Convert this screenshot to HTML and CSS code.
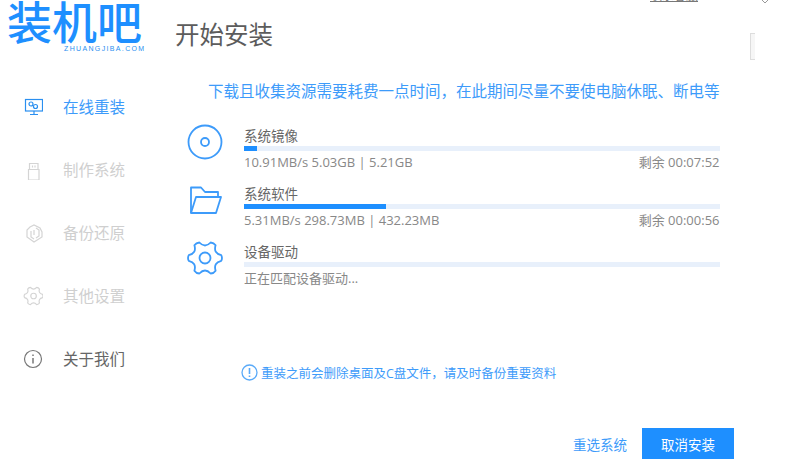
FILE: index.html
```html
<!DOCTYPE html>
<html>
<head>
    <title>装机吧</title>
    <meta charset="UTF-8">
    <link rel="stylesheet" href="styles.css">
</head>
<body>
<div class="app">
    <div class="top-link">联系客服</div>
    <svg class="top-close" width="14" height="6" viewBox="0 0 14 6"><path d="M1 -3 L7 3 L13 -3" fill="none" stroke="#999" stroke-width="1"/></svg>
    <div class="edge-box"></div>

    <div class="sidebar">
        <div class="logo">
            <div class="logo-name">装机吧</div>
            <div class="logo-url">ZHUANGJIBA.COM</div>
        </div>
        <div class="nav">
            <div class="nav-item active">
                <svg class="nav-icon" width="20" height="20" viewBox="0 0 20 20" fill="none" stroke="#2a8ff0" stroke-width="1.2">
                    <rect x="2.5" y="2.5" width="17" height="11.5"/>
                    <circle cx="8" cy="7" r="2"/>
                    <circle cx="12.5" cy="9.5" r="2"/>
                    <path d="M11 14 V17 M7 17.5 H15"/>
                </svg>
                <span>在线重装</span>
            </div>
            <div class="nav-item disabled">
                <svg class="nav-icon" width="20" height="20" viewBox="0 0 20 20" fill="none" stroke="#d4d4d4" stroke-width="1.2">
                    <path d="M6.5 3.5 H15 V9.5 H6.5 Z"/>
                    <path d="M5.5 9.5 H16 V20 H5.5 Z"/>
                    <path d="M9.5 5.5 V7.5 M12 5.5 V7.5"/>
                </svg>
                <span>制作系统</span>
            </div>
            <div class="nav-item disabled">
                <svg class="nav-icon" width="20" height="20" viewBox="0 0 20 20" fill="none" stroke="#d4d4d4" stroke-width="1.2">
                    <path d="M7 4 L11 2 L17 5 L19 9 V14 L11 19 L4 14 V7 Z"/>
                    <path d="M8 8 V14 L11 16 M13 5 L16 7 V13 L13 15 M11 7 V12"/>
                </svg>
                <span>备份还原</span>
            </div>
            <div class="nav-item disabled">
                <svg class="nav-icon" width="20" height="20" viewBox="-1 0 36 36" fill="none" stroke="#d4d4d4" stroke-width="2.1" stroke-linejoin="round">
                    <path d="M34.25 15.13 Q35.7 18 34.25 20.87 Q26.2 22.75 28.6 30.64 Q26.85 33.3 23.64 33.5 Q18 27.5 12.36 33.5 Q9.15 33.3 7.4 30.64 Q9.8 22.75 1.75 20.87 Q.3 18 1.75 15.13 Q9.8 13.25 7.4 5.36 Q9.15 2.7 12.36 2.5 Q18 8.5 23.64 2.5 Q26.85 2.7 28.6 5.36 Q26.2 13.25 34.25 15.13 Z"/>
                    <circle cx="18" cy="18" r="5"/>
                </svg>
                <span>其他设置</span>
            </div>
            <div class="nav-item about">
                <svg class="nav-icon" width="20" height="20" viewBox="0 0 20 20" fill="none" stroke="#777" stroke-width="1.2">
                    <circle cx="10" cy="10" r="8.5"/>
                    <path d="M10 9 V14.5" stroke-width="1.5"/>
                    <path d="M10 5.5 V7" stroke-width="1.5"/>
                </svg>
                <span>关于我们</span>
            </div>
        </div>
    </div>

    <div class="main">
        <h1 class="title">开始安装</h1>
        <div class="notice">下载且收集资源需要耗费一点时间，在此期间尽量不要使电脑休眠、断电等</div>

        <div class="tasks">
            <div class="task">
                <svg class="task-icon" width="36" height="36" viewBox="0 0 36 36" fill="none" stroke="#3d9bfa" stroke-width="1.8">
                    <circle cx="18" cy="18" r="16.5"/>
                    <circle cx="18" cy="18" r="4"/>
                </svg>
                <div class="task-body">
                    <div class="task-name">系统镜像</div>
                    <div class="bar"><div class="bar-fill" style="width: 13px"></div></div>
                    <div class="task-info">
                        <span>10.91MB/s 5.03GB | 5.21GB</span>
                        <span>剩余 00:07:52</span>
                    </div>
                </div>
            </div>
            <div class="task">
                <svg class="task-icon" width="36" height="36" viewBox="0 0 36 36" fill="none" stroke="#3d9bfa" stroke-width="1.8" stroke-linejoin="round">
                    <path d="M4 31 V5.5 H14 L18 10 H31 V15"/>
                    <path d="M4 31 L9 15 H34 L29 31 Z"/>
                </svg>
                <div class="task-body">
                    <div class="task-name">系统软件</div>
                    <div class="bar"><div class="bar-fill" style="width: 142px"></div></div>
                    <div class="task-info">
                        <span>5.31MB/s 298.73MB | 432.23MB</span>
                        <span>剩余 00:00:56</span>
                    </div>
                </div>
            </div>
            <div class="task">
                <svg class="task-icon" width="36" height="36" viewBox="0 0 36 36" fill="none" stroke="#3d9bfa" stroke-width="1.8" stroke-linejoin="round">
                    <path d="M34.25 15.13 Q35.7 18 34.25 20.87 Q26.2 22.75 28.6 30.64 Q26.85 33.3 23.64 33.5 Q18 27.5 12.36 33.5 Q9.15 33.3 7.4 30.64 Q9.8 22.75 1.75 20.87 Q.3 18 1.75 15.13 Q9.8 13.25 7.4 5.36 Q9.15 2.7 12.36 2.5 Q18 8.5 23.64 2.5 Q26.85 2.7 28.6 5.36 Q26.2 13.25 34.25 15.13 Z"/>
                    <circle cx="18" cy="18" r="5.5"/>
                </svg>
                <div class="task-body">
                    <div class="task-name">设备驱动</div>
                    <div class="bar"></div>
                    <div class="task-info">
                        <span>正在匹配设备驱动...</span>
                    </div>
                </div>
            </div>
        </div>

        <div class="tip">
            <svg width="17" height="17" viewBox="0 0 17 17" fill="none" stroke="#5aaaf8" stroke-width="1.3">
                <circle cx="8.5" cy="8.5" r="7.5"/>
                <path d="M8.5 4 V10 M8.5 11.5 V13" stroke-width="1.6"/>
            </svg>
            <span>重装之前会删除桌面及C盘文件，请及时备份重要资料</span>
        </div>

        <div class="actions">
            <a class="reselect">重选系统</a>
            <button class="cancel">取消安装</button>
        </div>
    </div>
</div>
</body>
</html>
```

FILE: styles.css
```css
html, body {
    margin: 0;
    padding: 0;
    background-color: #fff;
    overflow: hidden;
}
body {
    font-family: "Open Sans", "Noto Sans CJK SC", sans-serif;
}
.app {
    position: relative;
    display: flex;
    width: 788px;
    height: 463px;
    overflow: hidden;
}
.top-link {
    position: absolute;
    left: 650px;
    top: -11px;
    font-size: 12px;
    line-height: 14px;
    color: #777;
    text-decoration: underline;
}
.top-close {
    position: absolute;
    left: 758px;
    top: 0;
}
.edge-box {
    position: absolute;
    left: 750px;
    top: 33px;
    width: 5px;
    height: 27px;
    box-sizing: border-box;
    background-color: #f6f6f6;
    border: 1px solid #ddd;
    border-right: none;
}
.sidebar {
    width: 175px;
    flex-shrink: 0;
}
.logo {
    position: relative;
    height: 75px;
}
.logo-name {
    padding-left: 7px;
    font-family: "Noto Sans CJK SC", sans-serif;
    font-weight: 500;
    font-size: 45px;
    line-height: 42px;
    color: #1e8fff;
}
.logo-url {
    position: absolute;
    left: 64px;
    top: 44px;
    font-family: "Liberation Sans", sans-serif;
    font-size: 7px;
    line-height: 9px;
    letter-spacing: 1.35px;
    white-space: nowrap;
    color: #2a8ff0;
}
.nav-item {
    display: flex;
    align-items: center;
    gap: 20px;
    height: 63px;
    padding-left: 23px;
    font-size: 15.5px;
}
.nav-item.active {
    color: #3d9bfa;
}
.nav-item.disabled {
    color: #cfcfcf;
}
.nav-item.about {
    color: #666;
}
.nav-icon {
    flex-shrink: 0;
}
.main {
    flex: 1;
    display: flex;
    flex-direction: column;
    padding-right: 70px;
}
.title {
    margin: 0;
    height: 70px;
    line-height: 70px;
    font-size: 24.5px;
    font-weight: 400;
    color: #5c5c5c;
}
.notice {
    margin-left: 33px;
    height: 42px;
    line-height: 42px;
    font-size: 15.5px;
    white-space: nowrap;
    color: #3d9bfa;
}
.tasks {
    margin-top: 13px;
    margin-left: 12px;
}
.task {
    display: flex;
    gap: 21px;
    height: 58px;
}
.task-icon {
    flex-shrink: 0;
    margin-top: -1px;
    overflow: visible;
}
.task-body {
    flex: 1;
}
.task-name {
    height: 21px;
    line-height: 22px;
    font-size: 13.5px;
    color: #666;
}
.bar {
    height: 5px;
    background-color: #e8f0fb;
}
.bar-fill {
    height: 5px;
    background-color: #1e8fff;
}
.task-info {
    display: flex;
    justify-content: space-between;
    margin-top: 1px;
    height: 20px;
    line-height: 20px;
    font-size: 13px;
    color: #888;
}
.tip {
    display: flex;
    align-items: center;
    gap: 3px;
    margin-top: 64px;
    margin-left: 66px;
    font-size: 12.5px;
    white-space: nowrap;
    color: #3d9bfa;
}
.actions {
    display: flex;
    align-items: center;
    gap: 15px;
    margin-top: 46px;
    margin-left: 398px;
    margin-right: -15px;
}
.reselect {
    font-size: 13.5px;
    color: #3d9bfa;
}
.cancel {
    width: 92px;
    height: 31px;
    padding: 0;
    border: none;
    background-color: #1e8fff;
    color: #fff;
    font-family: inherit;
    font-size: 13.5px;
}
```
